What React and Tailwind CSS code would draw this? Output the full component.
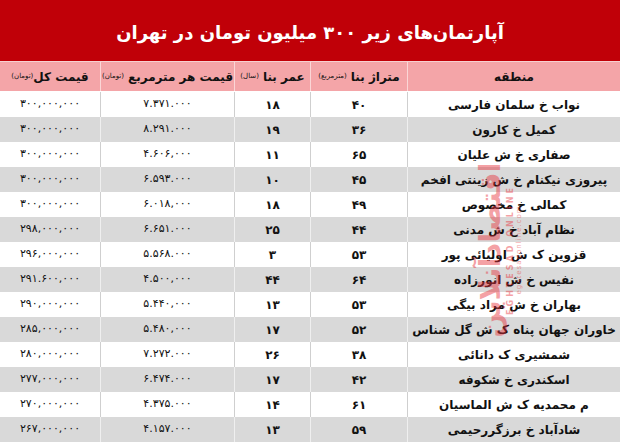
import React from "react";

const rows = [
  ["نواب خ سلمان فارسی", "۴۰", "۱۸", "۷.۳۷۱.۰۰۰", "۳۰۰,۰۰۰,۰۰۰"],
  ["کمیل خ کارون", "۳۶", "۱۹", "۸.۲۹۱.۰۰۰", "۳۰۰,۰۰۰,۰۰۰"],
  ["صفاری خ ش علیان", "۶۵", "۱۱", "۴.۶۰۶,۰۰۰", "۳۰۰,۰۰۰,۰۰۰"],
  ["پیروزی نیکنام خ ش زینتی افخم", "۴۵", "۱۰", "۶.۵۹۳.۰۰۰", "۳۰۰,۰۰۰,۰۰۰"],
  ["کمالی خ مخصوص", "۴۹", "۱۸", "۶.۰۱۸,۰۰۰", "۳۰۰,۰۰۰,۰۰۰"],
  ["نظام آباد خ ش مدنی", "۴۴", "۲۵", "۶.۶۵۱.۰۰۰", "۲۹۸,۰۰۰,۰۰۰"],
  ["قزوین ک ش اولیائی پور", "۵۳", "۳", "۵.۵۶۸.۰۰۰", "۲۹۶,۰۰۰,۰۰۰"],
  ["نفیس خ ش انورزاده", "۶۴", "۴۴", "۴.۵۰۰,۰۰۰", "۲۹۱.۶۰۰,۰۰۰"],
  ["بهاران خ ش مراد بیگی", "۵۳", "۱۳", "۵.۴۴۰,۰۰۰", "۲۹۰,۰۰۰,۰۰۰"],
  ["خاوران جهان پناه ک ش گل شناس", "۵۲", "۱۷", "۵.۴۸۰,۰۰۰", "۲۸۵,۰۰۰,۰۰۰"],
  ["شمشیری ک دانائی", "۳۸", "۲۶", "۷.۲۷۲.۰۰۰", "۲۸۰,۰۰۰,۰۰۰"],
  ["اسکندری خ شکوفه", "۴۲", "۱۷", "۶.۴۷۴.۰۰۰", "۲۷۷,۰۰۰,۰۰۰"],
  ["م محمدیه ک ش الماسیان", "۶۱", "۱۴", "۴.۳۷۵.۰۰۰", "۲۷۰,۰۰۰,۰۰۰"],
  ["شادآباد خ برزگررحیمی", "۵۹", "۱۳", "۴.۱۵۷.۰۰۰", "۲۶۷,۰۰۰,۰۰۰"],
];

const font = { fontFamily: '"DejaVu Sans", sans-serif' };

export default function App() {
  return (
    <div
      dir="rtl"
      className="relative w-[620px] h-[442px] overflow-hidden bg-white text-[#111]"
      style={font}
    >
      <div className="h-[61px] bg-[#c00008] flex items-center justify-center pt-[5px]">
        <span className="text-white font-bold text-[18px] leading-none">
          آپارتمان‌های زیر ۳۰۰ میلیون تومان در تهران
        </span>
      </div>
      <div className="grid grid-cols-[213px_97px_76px_134px_100px] h-[31px] bg-[#f4a5a8] border-t border-[#f7d0d0] border-b border-b-white">
        <div className="flex items-center justify-center font-bold text-[12px] border-l border-[#fbd6d6]">منطقه</div>
        <div className="flex items-center justify-center gap-1 border-l border-[#fbd6d6]">
          <span className="font-bold text-[12px]">متراژ بنا</span>
          <span className="text-[7px]">(مترمربع)</span>
        </div>
        <div className="flex items-center justify-center gap-1 border-l border-[#fbd6d6]">
          <span className="font-bold text-[12px]">عمر بنا</span>
          <span className="text-[7px]">(سال)</span>
        </div>
        <div className="flex items-center justify-center gap-1 border-l border-[#fbd6d6]">
          <span className="font-bold text-[12px]">قیمت هر مترمربع</span>
          <span className="text-[7px]">(تومان)</span>
        </div>
        <div className="flex items-center justify-center">
          <span className="font-bold text-[12px]">قیمت کل</span>
          <span className="text-[7px]">(تومان)</span>
        </div>
      </div>
      {rows.map((r, i) => {
        const gray = i % 2 === 1;
        const bc = gray ? "border-[#efefef]" : "border-[#cfcfcf]";
        return (
          <div
            key={i}
            className={
              "grid grid-cols-[213px_97px_76px_134px_100px] h-[25px] text-[12px] " +
              (gray ? "bg-[#d9d9d9]" : "bg-white")
            }
          >
            <div className={"flex items-center justify-center font-bold border-l " + bc}>{r[0]}</div>
            <div className={"flex items-center justify-center font-bold border-l " + bc}>{r[1]}</div>
            <div className={"flex items-center justify-center font-bold border-l " + bc}>{r[2]}</div>
            <div className={"flex items-center justify-center text-[11px] border-l " + bc}>{r[3]}</div>
            <div className="flex items-center justify-center text-[11px]">{r[4]}</div>
          </div>
        );
      })}
      <div className="absolute left-[476px] top-[163px] w-[46px] h-[174px] pointer-events-none">
        <div
          dir="ltr"
          className="absolute left-[-64px] top-[64px] w-[174px] h-[46px] -rotate-90 flex flex-col items-center justify-center opacity-45"
        >
          <span className="text-[#e8303a] font-bold text-[29px] leading-none" dir="rtl">اقتصادآنلاین</span>
          <span className="text-[#e8303a] font-bold text-[8px] leading-none mt-[2px] tracking-[3px]">EGHTESAD ONLINE</span>
          <span className="text-[#e8303a] text-[7px] leading-none mt-[1px] tracking-[1px]">eghtesadonline.com</span>
        </div>
      </div>
    </div>
  );
}
